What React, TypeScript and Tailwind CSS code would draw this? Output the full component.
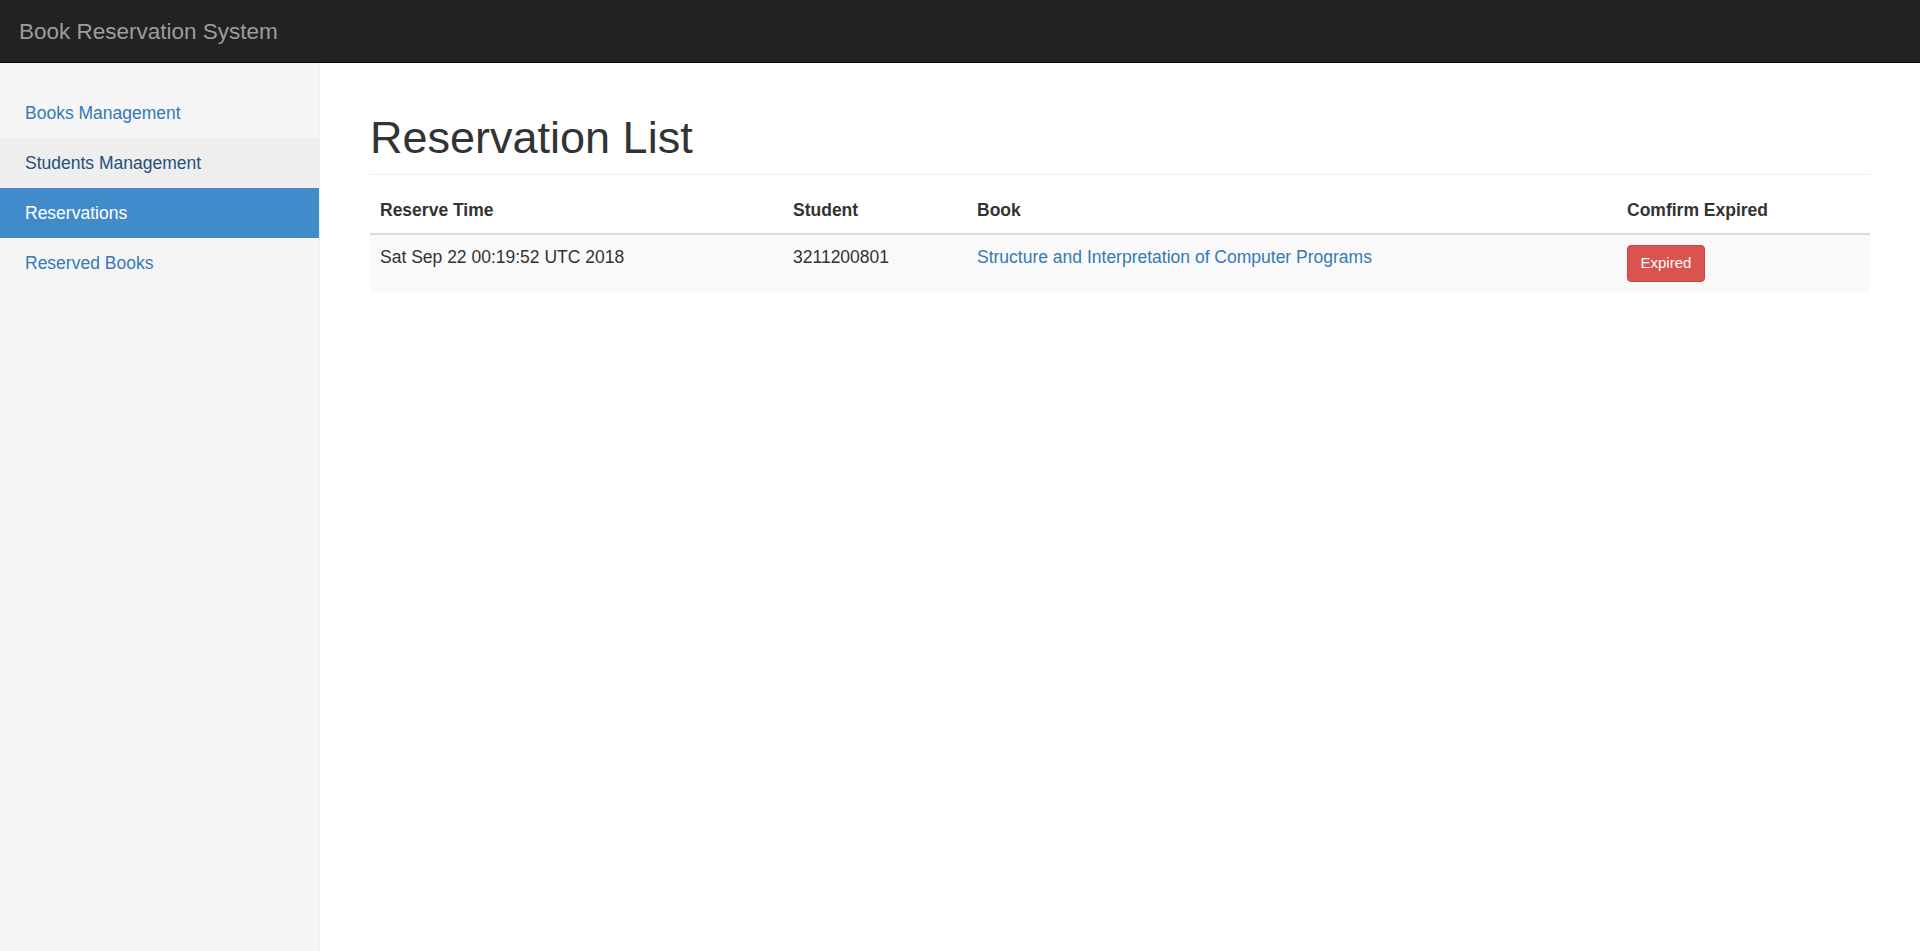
import React from "react";

export default function App() {
  const font = { fontFamily: '"Liberation Sans", Arial, sans-serif' };
  return (
    <div className="flex h-[951px] w-full flex-col bg-white text-[17.5px] leading-[25px] text-[#333]" style={font}>
      <div className="flex h-[63px] shrink-0 items-center border-b border-[#080808] bg-[#222] px-[19px]">
        <span className="text-[22.5px] leading-[25px] text-[#9d9d9d]">Book Reservation System</span>
      </div>
      <div className="flex min-h-0 flex-1">
        <aside className="w-[320px] shrink-0 border-r border-[#eee] bg-[#f5f5f5] pt-[25px]">
          <ul className="flex flex-col">
            <li><a className="block h-[50px] px-[25px] py-[12.5px] text-[#337ab7]">Books Management</a></li>
            <li><a className="block h-[50px] bg-[#eee] px-[25px] py-[12.5px] text-[#23527c]">Students Management</a></li>
            <li><a className="block h-[50px] bg-[#428bca] px-[25px] py-[12.5px] text-white">Reservations</a></li>
            <li><a className="block h-[50px] px-[25px] py-[12.5px] text-[#337ab7]">Reserved Books</a></li>
          </ul>
        </aside>
        <main className="min-w-0 flex-1 pl-[50px] pr-[50px] pt-[50px]">
          <div className="border-b border-[#eee] pb-[11px]">
            <h1 className="text-[45px] font-normal leading-[49.5px] text-[#333]">Reservation List</h1>
          </div>
          <table className="mt-[13px] w-full table-fixed border-collapse">
            <colgroup>
              <col className="w-[413px]" />
              <col className="w-[184px]" />
              <col className="w-[650px]" />
              <col />
            </colgroup>
            <thead>
              <tr className="border-b-2 border-[#ddd] text-left">
                <th className="px-[10px] py-[10px] text-left font-bold">Reserve Time</th>
                <th className="px-[10px] py-[10px] text-left font-bold">Student</th>
                <th className="px-[10px] py-[10px] text-left font-bold">Book</th>
                <th className="px-[10px] py-[10px] text-left font-bold">Comfirm Expired</th>
              </tr>
            </thead>
            <tbody>
              <tr className="bg-[#f9f9f9] align-top">
                <td className="px-[10px] pb-[10px] pt-[10px]">Sat Sep 22 00:19:52 UTC 2018</td>
                <td className="px-[10px] pb-[10px] pt-[10px]">3211200801</td>
                <td className="px-[10px] pb-[10px] pt-[10px]"><a className="text-[#337ab7]">Structure and Interpretation of Computer Programs</a></td>
                <td className="px-[10px] pb-[10px] pt-[10px]">
                  <button className="h-[37px] rounded-[4px] border border-[#d43f3a] bg-[#d9534f] px-[12.5px] text-[15px] leading-[22.5px] text-white">Expired</button>
                </td>
              </tr>
            </tbody>
          </table>
        </main>
      </div>
    </div>
  );
}
